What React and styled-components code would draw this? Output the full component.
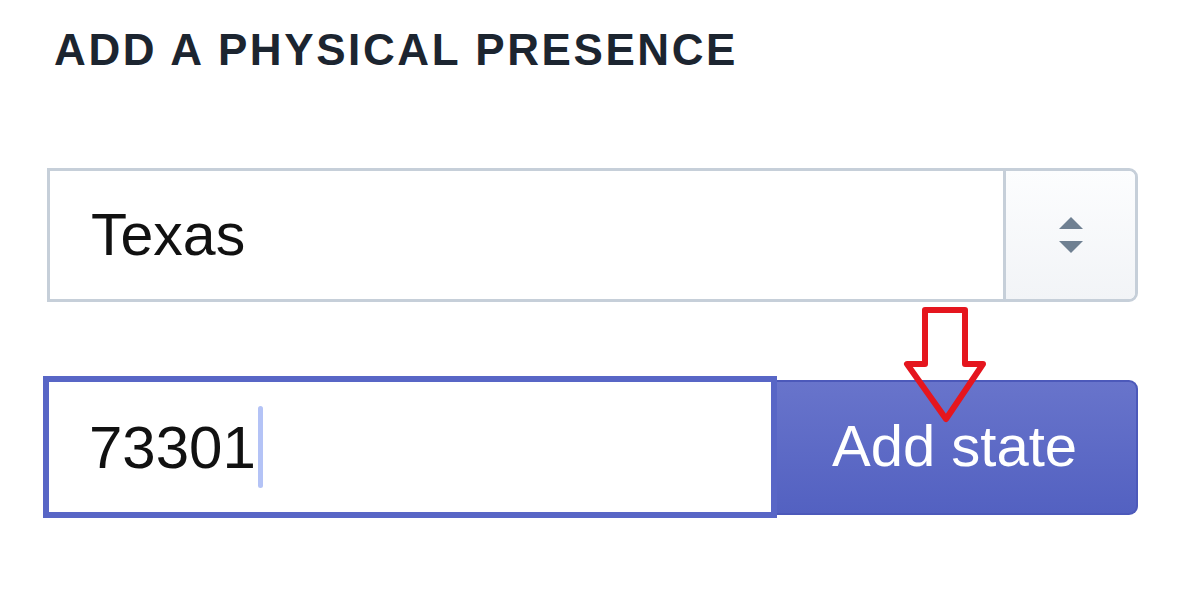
import React from 'react';
import styled, { createGlobalStyle } from 'styled-components';

const GlobalStyle = createGlobalStyle`
  html, body {
    margin: 0;
    background: #ffffff;
  }
  body {
    font-family: 'Liberation Sans', Arial, sans-serif;
  }
`;

const Page = styled.div`
  position: relative;
  width: 1200px;
  height: 603px;
  padding: 28px 62px 0 43px;
  box-sizing: border-box;
`;

const Heading = styled.h2`
  margin: 0 0 96px 11px;
  font-size: 44px;
  line-height: 44px;
  font-weight: 700;
  letter-spacing: 2.6px;
  color: #1c2530;
`;

const SelectBox = styled.div`
  display: flex;
  height: 134px;
  margin-left: 4px;
  border: 3px solid #c6cfd9;
  border-radius: 0 9px 9px 0;
  box-sizing: border-box;
  overflow: hidden;
  background: #ffffff;
`;

const SelectValue = styled.div`
  flex: 1;
  display: flex;
  align-items: center;
  padding-left: 41px;
  font-size: 59px;
  color: #111111;
`;

const SelectToggle = styled.div`
  width: 129px;
  display: flex;
  align-items: center;
  justify-content: center;
  border-left: 3px solid #c6cfd9;
  background: linear-gradient(#fcfdfe, #f2f4f7);
`;

const Row = styled.div`
  display: flex;
  align-items: center;
  margin-top: 74px;
`;

const ZipInput = styled.div`
  width: 734px;
  height: 142px;
  box-sizing: border-box;
  border: 6px solid #5866c6;
  display: flex;
  align-items: center;
  padding-left: 40px;
  font-size: 60px;
  color: #111111;
  background: #ffffff;
`;

const Caret = styled.span`
  display: inline-block;
  width: 5px;
  height: 82px;
  margin-left: 2px;
  border-radius: 3px;
  background: #b4c3f6;
`;

const AddButton = styled.button`
  flex: 1;
  height: 135px;
  margin: 0;
  border: 2px solid #4c59ba;
  border-left: none;
  border-radius: 0 9px 9px 0;
  background: linear-gradient(#6874cb, #5361c1);
  color: #ffffff;
  font-family: 'Liberation Sans', Arial, sans-serif;
  font-size: 58px;
  padding: 0 4px 4px 0;
  cursor: pointer;
`;

const Pointer = styled.svg`
  position: absolute;
  left: 900px;
  top: 303px;
`;

const SortIcon = () => (
  <svg width="26" height="38" viewBox="0 0 26 38">
    <polygon points="1,13 13,1 25,13" fill="#6f8092" />
    <polygon points="1,25 13,37 25,25" fill="#6f8092" />
  </svg>
);

export default function App() {
  return (
    <>
      <GlobalStyle />
      <Page>
        <Heading>ADD A PHYSICAL PRESENCE</Heading>
        <SelectBox>
          <SelectValue>Texas</SelectValue>
          <SelectToggle>
            <SortIcon />
          </SelectToggle>
        </SelectBox>
        <Row>
          <ZipInput>
            73301
            <Caret />
          </ZipInput>
          <AddButton>Add state</AddButton>
        </Row>
        <Pointer width="92" height="125" viewBox="900 303 92 125">
          <polygon
            points="925,310 965,310 965,364 983,364 946,419 907,364 925,364"
            fill="none"
            stroke="#e5161e"
            strokeWidth="6"
            strokeLinejoin="round"
          />
        </Pointer>
      </Page>
    </>
  );
}
